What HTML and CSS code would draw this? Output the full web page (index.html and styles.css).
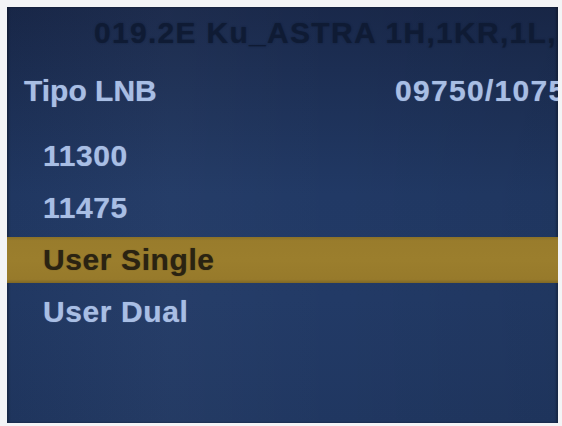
FILE: index.html
```html
<!DOCTYPE html>
<html lang="es">
<head>
<meta charset="utf-8">
<title>Tipo LNB</title>
<link rel="stylesheet" href="styles.css">
</head>
<body>
<div class="screen">
  <div class="header">019.2E Ku_ASTRA 1H,1KR,1L,</div>
  <div class="setting">
    <span class="label">Tipo LNB</span>
    <span class="value">09750/10750</span>
  </div>
  <ul class="options">
    <li class="option">11300</li>
    <li class="option">11475</li>
    <li class="option selected">User Single</li>
    <li class="option">User Dual</li>
  </ul>
</div>
</body>
</html>
```

FILE: styles.css
```css
html, body {
  margin: 0;
  padding: 0;
  background: #f3f4f6;
}

body {
  padding: 7px 4px 3px 7px;
  width: 551px;
}

.screen {
  height: 416px;
  overflow: hidden;
  background:
    linear-gradient(90deg, rgba(0,0,0,0.04) 0%, rgba(255,255,255,0.02) 30%, rgba(0,0,0,0.0) 60%, rgba(0,0,0,0.06) 100%),
    linear-gradient(180deg, #19284a 0%, #1d3056 20%, #213965 45%, #223a66 70%, #203761 100%);
  font-family: "Liberation Sans", Arial, sans-serif;
  font-weight: bold;
  font-size: 30px;
  line-height: 36px;
  white-space: nowrap;
  box-shadow: inset 2px 0 2px rgba(0,0,0,0.25), inset -2px 0 2px rgba(0,0,0,0.25);
}

.header {
  padding: 8px 0 0 87px;
  height: 36px;
  color: #0f1b34;
  letter-spacing: 1.3px;
  text-shadow: 0 0 2px rgba(15, 27, 52, 0.7);
  overflow: hidden;
}

.setting {
  display: grid;
  grid-template-columns: 371px auto;
  margin-top: 22px;
  padding-left: 17px;
  height: 36px;
  color: #a8bee4;
  text-shadow: 0 0 1px rgba(168, 190, 228, 0.6);
  overflow: hidden;
}

.value {
  letter-spacing: 1.3px;
}

.options {
  list-style: none;
  margin: 24px 0 0 0;
  padding: 0;
  display: flex;
  flex-direction: column;
  gap: 6px;
}

.option {
  height: 46px;
  line-height: 46px;
  padding-left: 36px;
  color: #a8bee4;
  letter-spacing: 0.6px;
  text-shadow: 0 0 1px rgba(168, 190, 228, 0.6);
}

.option.selected {
  background: linear-gradient(180deg, #8a7128 0%, #997c2c 8%, #9b7e2d 50%, #977a2b 92%, #7e6725 100%);
  color: #2a2312;
  text-shadow: 0 0 1px rgba(42, 35, 18, 0.6);
}
```
